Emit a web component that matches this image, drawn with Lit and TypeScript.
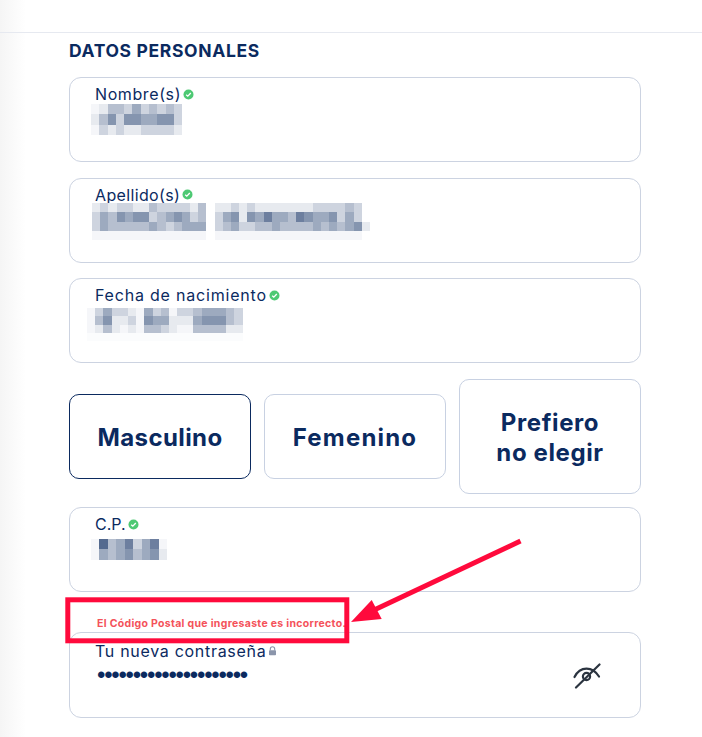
import { LitElement, html, css, svg } from "lit";
import { customElement } from "lit/decorators.js";

interface Mosaic { w: number; heights: number[]; x: number; y: number; rows: string[]; }
interface Field { label: string; spacing: number; mosaic: Mosaic; }

const nombre: Mosaic = { w: 8.3, heights: [10, 11, 10], x: -4, y: 0, rows: [
  "a1332423232",
  "13525544552",
  "a2121122221",
]};
const apellido: Mosaic = { w: 8.18, heights: [9, 10, 9, 9], x: -3, y: -2, rows: [
  "1212211322221301121211111112222320",
  "2435455234542302451546443654452420",
  "2433333432344402342233433334343451",
  "aaaaaaaaaaaaaa0aaaaaaaaaaaaaaaaaa0",
]};
const fecha: Mosaic = { w: 8.2, heights: [8, 9, 8, 8], x: -8, y: 3, rows: [
  "a24221a423a22344432",
  "a35112a544111455532",
  "a131a1a3321aa333311",
  "bbbbbbbbbbbbbbbbbbb",
]};
const cp: Mosaic = { w: 8.45, heights: [10, 11], x: -4, y: 5, rows: [
  "a7346246a",
  "a43453451",
]};

const FIELD_A: Field = { label: "Nombre(s)", spacing: 0.6, mosaic: nombre };
const FIELD_B: Field = { label: "Apellido(s)", spacing: 0.35, mosaic: apellido };
const FIELD_C: Field = { label: "Fecha de nacimiento", spacing: 0.8, mosaic: fecha };
const FIELD_D: Field = { label: "C.P.", spacing: 0, mosaic: cp };

const cellColor = (d: string) => {
  const t = d === "a" ? 0.04 : d === "b" ? 0.015 : Number(d) / 10;
  const mix = (a: number) => Math.round(255 + (a - 255) * t);
  return `rgb(${mix(11)},${mix(42)},${mix(95)})`;
};

@customElement("app-root")
export class AppRoot extends LitElement {
  static styles = css`
    :host {
      display: block;
      position: relative;
      width: 702px;
      height: 737px;
      overflow: hidden;
      font-family: Inter, "Liberation Sans", sans-serif;
      color: #0b2a5f;
      background: linear-gradient(to right, #f5f5f5, #ffffff 26px);
    }
    .top { height: 32px; border-bottom: 1px solid #e6e9f0; }
    .main { padding: 0 61px 0 69px; }
    h2 {
      margin: 0;
      height: 44px;
      display: flex;
      align-items: center;
      padding-bottom: 9px;
      box-sizing: border-box;
      font-size: 17.5px;
      font-weight: 700;
      letter-spacing: 0.65px;
      white-space: nowrap;
    }
    .stack { display: flex; flex-direction: column; gap: 15.5px; }
    .field {
      box-sizing: border-box;
      height: 85px;
      border: 1px solid #ccd3e1;
      border-radius: 12px;
      background: #fff;
      padding: 6px 25px 0;
    }
    .label {
      display: flex;
      align-items: center;
      gap: 2px;
      height: 20px;
      font-size: 16px;
      letter-spacing: 0.7px;
      white-space: nowrap;
    }
    .label svg { flex: none; }
    .mosaic { display: flex; flex-direction: column; }
    .mrow { display: flex; }
    .gender {
      display: grid;
      grid-template-columns: repeat(3, 182px);
      column-gap: 13px;
      align-items: center;
      height: 115px;
      margin-bottom: -2px;
    }
    .opt {
      box-sizing: border-box;
      height: 85px;
      border: 1px solid #c8d1e2;
      border-radius: 10px;
      padding-top: 3px;
      display: flex;
      align-items: center;
      justify-content: center;
      text-align: center;
      font-size: 24px;
      font-weight: 700;
      line-height: 29.5px;
      letter-spacing: 0.5px;
    }
    .opt.on { border-color: #0b2a5f; letter-spacing: 0.4px; }
    .opt.fem { letter-spacing: 1.2px; }
    .opt.tall { height: 115px; letter-spacing: 0.6px; }
    .errwrap { height: 40px; margin: -15.5px 0; display: flex; align-items: flex-end; }
    .err {
      padding: 0 0 2px 28px;
      font-size: 10.5px;
      font-weight: 700;
      line-height: 12px;
      color: #f4525a;
      letter-spacing: 0.31px;
      white-space: nowrap;
    }
    .pw {
      height: 86px;
      padding: 8px 39px 0 25px;
      display: flex;
      align-items: flex-start;
      justify-content: space-between;
    }
    .pwtext { display: flex; flex-direction: column; }
    .dots {
      font-family: "Liberation Sans", sans-serif;
      font-size: 24px;
      line-height: 24px;
      letter-spacing: -1.26px;
      margin: 2px 0 0 2px;
      white-space: nowrap;
    }
    .eye { align-self: center; margin-top: -8px; flex: none; display: block; }
    .overlay { position: absolute; left: 0; top: 0; pointer-events: none; }
  `;

  private check() {
    return html`<svg width="11" height="11" viewBox="0 0 11 11" aria-hidden="true">
      <circle cx="5.5" cy="5.5" r="5" fill="#4dc973"></circle>
      <path d="M3.2 5.7 4.8 7.2 7.8 4" fill="none" stroke="#fff" stroke-width="1.3"></path>
    </svg>`;
  }

  private mosaic(m: Mosaic) {
    return html`<div class="mosaic" style="margin-left:${m.x}px;margin-top:${m.y}px">
      ${m.rows.map((r, i) => html`<div class="mrow" style="height:${m.heights[i]}px">
        ${[...r].map((c) => html`<span style="width:${m.w}px;background:${cellColor(c)}"></span>`)}
      </div>`)}
    </div>`;
  }

  private field(f: Field) {
    return html`<div class="field">
      <div class="label" style="letter-spacing:${f.spacing}px">${f.label}${this.check()}</div>
      ${this.mosaic(f.mosaic)}
    </div>`;
  }

  render() {
    return html`
      <div class="top"></div>
      <div class="main">
        <h2>DATOS PERSONALES</h2>
        <div class="stack">
          ${this.field(FIELD_A)}
          ${this.field(FIELD_B)}
          ${this.field(FIELD_C)}
          <div class="gender">
            <div class="opt on">Masculino</div>
            <div class="opt fem">Femenino</div>
            <div class="opt tall">Prefiero<br />no elegir</div>
          </div>
          ${this.field(FIELD_D)}
          <div class="errwrap">
            <div class="err">El Código Postal que ingresaste es incorrecto.</div>
          </div>
          <div class="field pw">
            <div class="pwtext">
              <div class="label">Tu nueva contraseña
                <svg width="9" height="10" viewBox="0 0 9 10" aria-hidden="true">
                  <path d="M2.3 4.5V3a2.2 2.2 0 0 1 4.4 0v1.5" fill="none" stroke="#8b95ab" stroke-width="1.1"></path>
                  <rect x="1" y="4.2" width="7" height="5" rx="0.8" fill="#8b95ab"></rect>
                </svg>
              </div>
              <div class="dots">•••••••••••••••••••••</div>
            </div>
            <svg class="eye" width="28" height="27" viewBox="0 0 28 27" fill="none" stroke="#2b3440" stroke-width="2.2" stroke-linecap="round" aria-hidden="true">
              <path d="M1.5 15C4.5 9 9 6.6 13.5 6.6S22.5 9 26 14.5"></path>
              <circle cx="13.5" cy="14.5" r="3.6"></circle>
              <path d="M3 25.5 26.5 2.5"></path>
            </svg>
          </div>
        </div>
      </div>
      <svg class="overlay" width="702" height="737" viewBox="0 0 702 737" aria-hidden="true">
        ${svg`
          <rect x="67.8" y="599.8" width="279" height="41" fill="none" stroke="#ff0a3c" stroke-width="5"></rect>
          <path d="M520.5 541 372 611" fill="none" stroke="#ff0a3c" stroke-width="5"></path>
          <path d="M351 622 371.7 600 381.7 619Z" fill="#ff0a3c"></path>
        `}
      </svg>
    `;
  }
}
